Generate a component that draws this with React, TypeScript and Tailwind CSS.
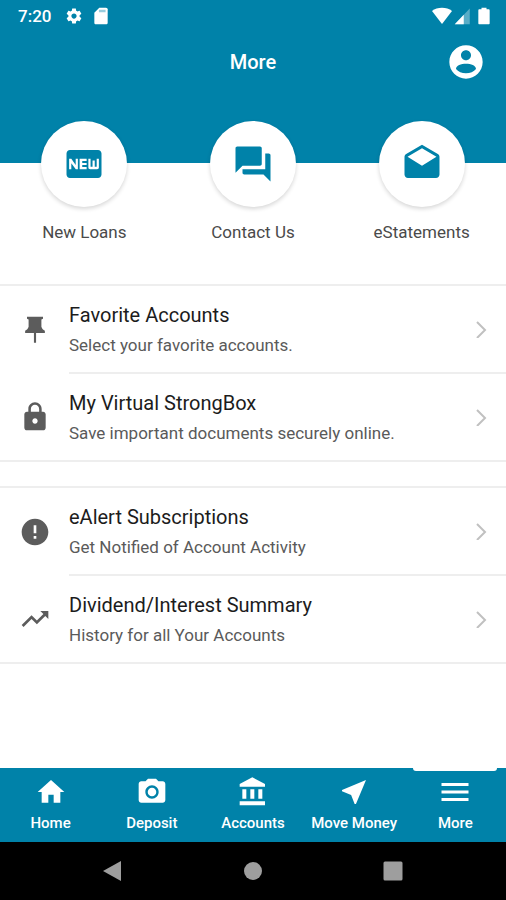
import type { ReactNode } from "react";

const ICONS = {
  settings:
    "M19.43 12.98c.04-.32.07-.64.07-.98s-.03-.66-.07-.98l2.11-1.65c.19-.15.24-.42.12-.64l-2-3.46c-.12-.22-.39-.3-.61-.22l-2.49 1c-.52-.4-1.08-.73-1.69-.98l-.38-2.65C14.46 2.18 14.25 2 14 2h-4c-.25 0-.46.18-.49.42l-.38 2.65c-.61.25-1.17.59-1.69.98l-2.49-1c-.23-.09-.49 0-.61.22l-2 3.46c-.13.22-.07.49.12.64l2.11 1.65c-.04.32-.07.65-.07.98s.03.66.07.98l-2.11 1.65c-.19.15-.24.42-.12.64l2 3.46c.12.22.39.3.61.22l2.49-1c.52.4 1.08.73 1.69.98l.38 2.65c.03.24.24.42.49.42h4c.25 0 .46-.18.49-.42l.38-2.65c.61-.25 1.17-.59 1.69-.98l2.49 1c.23.09.49 0 .61-.22l2-3.46c.12-.22.07-.49-.12-.64l-2.11-1.65zM12 15.5c-1.93 0-3.5-1.57-3.5-3.5s1.57-3.5 3.5-3.5 3.5 1.57 3.5 3.5-1.57 3.5-3.5 3.5z",
  sdCard: "M18 2h-8L4 8v12c0 1.1.9 2 2 2h12c1.1 0 2-.9 2-2V4c0-1.1-.9-2-2-2z",
  wifi: "M0 6C3.200 3.300 7.500 2 12 2S20.800 3.300 24 6L12 21.500z",
  battery:
    "M17.500 4H15V2H9v2H6.500C5.700 4 5.200 4.600 5.200 5.330v15.330C5.200 21.400 5.700 22 6.500 22h11c.800 0 1.300-.6 1.300-1.330V5.330C18.800 4.600 18.300 4 17.500 4z",
  account:
    "M12 2C6.48 2 2 6.480 2 12s4.480 10 10 10 10-4.480 10-10S17.520 2 12 2zm0 3c1.660 0 3 1.340 3 3s-1.340 3-3 3-3-1.340-3-3 1.340-3 3-3zm0 13.800c-2.500 0-4.710-.9-6-2.600.030-1.990 3-3.080 6-3.080s5.970 1.090 6 3.080c-1.290 1.700-3.500 2.600-6 2.600z",
  fiberNew:
    "M20 4H4c-1.11 0-1.990.890-1.990 2L2 18c0 1.110.890 2 2 2h16c1.110 0 2-.89 2-2V6c0-1.110-.89-2-2-2zM8.500 15H7.300l-2.550-3.500V15H3.500V9h1.250l2.500 3.500V9H8.500v6zm5-4.740H11v1.120h2.500v1.260H11v1.110h2.500V15h-4V9h4v1.260zm7 3.740c0 .550-.45 1-1 1h-4c-.55 0-1-.45-1-1V9h1.250v4.510h1.130V9.990h1.250v3.510h1.120V9h1.250v5z",
  forum:
    "M21 6h-2v9H6v2c0 .550.450 1 1 1h11l4 4V7c0-.55-.45-1-1-1zm-4 6V3c0-.55-.45-1-1-1H3c-.55 0-1 .450-1 1v14l4-4h10c.550 0 1-.45 1-1z",
  drafts:
    "M21.990 8c0-.72-.37-1.350-.94-1.700L12 1 2.950 6.300C2.380 6.650 2 7.280 2 8v10c0 1.100.900 2 2 2h16c1.100 0 2-.9 2-2l-.01-10zM12 13L3.740 7.840 12 3l8.260 4.840L12 13z",
  pin: "M6 2h12v1.500l-1.200.6V9.500c.400 1.500 1.400 2.400 2.600 3.100V14.200h-6.600v7.300h-1.600v-7.300H4.600v-1.600c1.200-.7 2.200-1.600 2.600-3.100V4.100L6 3.500z",
  lock: "M18 8h-1V6c0-2.760-2.240-5-5-5S7 3.240 7 6v2H6c-1.100 0-2 .9-2 2v10c0 1.100.9 2 2 2h12c1.100 0 2-.9 2-2V10c0-1.100-.9-2-2-2zm-6 9c-1.100 0-2-.9-2-2s.9-2 2-2 2 .9 2 2-.9 2-2 2zm3.100-9H8.900V6c0-1.710 1.390-3.100 3.100-3.100 1.710 0 3.100 1.390 3.100 3.100v2z",
  error:
    "M12 2C6.480 2 2 6.480 2 12s4.480 10 10 10 10-4.480 10-10S17.520 2 12 2zm1 15h-2v-2h2v2zm0-4h-2V7h2v6z",
  trending:
    "M16 6l2.290 2.290-4.880 4.880-4-4L2 16.590 3.410 18l6-6 4 4 6.300-6.290L22 12V6z",
  home: "M10 20v-6h4v6h5v-8h3L12 3 2 12h3v8z",
  camera:
    "M9 2L7.170 4H4c-1.100 0-2 .9-2 2v12c0 1.100.9 2 2 2h16c1.100 0 2-.9 2-2V6c0-1.100-.9-2-2-2h-3.170L15 2H9zm3 15c-2.760 0-5-2.240-5-5s2.240-5 5-5 5 2.240 5 5-2.240 5-5 5zm0-1.800a3.200 3.200 0 1 0 0-6.400 3.200 3.200 0 0 0 0 6.400z",
  bank: "M4 10v7h3v-7H4zm6 0v7h3v-7h-3zM2 22h19v-3H2v3zm14-12v7h3v-7h-3zm-4.500-9L2 6v2h19V6l-9.500-5z",
  nearMe: "M21 3L3 10.530v.980l6.840 2.650L12.480 21h.980L21 3z",
  menu: "M3 18h18v-2H3v2zm0-5h18v-2H3v2zm0-7v2h18V6H3z",
};

type IconName = keyof typeof ICONS;

function Icon({ name, className }: { name: IconName; className: string }) {
  return (
    <svg viewBox="0 0 24 24" fill="currentColor" fillRule="evenodd" aria-hidden="true" className={className}>
      <path d={ICONS[name]} />
    </svg>
  );
}

const shortcuts: { icon: IconName; label: string }[] = [
  { icon: "fiberNew", label: "New Loans" },
  { icon: "forum", label: "Contact Us" },
  { icon: "drafts", label: "eStatements" },
];

type Item = { icon: IconName; title: string; detail: string };

const accountItems: Item[] = [
  { icon: "pin", title: "Favorite Accounts", detail: "Select your favorite accounts." },
  { icon: "lock", title: "My Virtual StrongBox", detail: "Save important documents securely online." },
];

const activityItems: Item[] = [
  { icon: "error", title: "eAlert Subscriptions", detail: "Get Notified of Account Activity" },
  { icon: "trending", title: "Dividend/Interest Summary", detail: "History for all Your Accounts" },
];

const tabs: { icon: IconName; label: string }[] = [
  { icon: "home", label: "Home" },
  { icon: "camera", label: "Deposit" },
  { icon: "bank", label: "Accounts" },
  { icon: "nearMe", label: "Move Money" },
  { icon: "menu", label: "More" },
];

function StatusBar() {
  return (
    <div className="flex h-8 items-center justify-between pl-[18px] pr-3 text-white">
      <div className="flex items-center">
        <span className="text-[17px] font-medium leading-8">7:20</span>
        <Icon name="settings" className="ml-3.5 size-[18px]" />
        <svg viewBox="0 0 24 24" aria-hidden="true" className="ml-2 size-5">
          <path d={ICONS.sdCard} fill="currentColor" />
          <path d="M9.500 4.500h8v3h-8z" fill="#0082a9" fillOpacity="0.4" />
        </svg>
      </div>
      <div className="flex items-center">
        <Icon name="wifi" className="size-5" />
        <svg viewBox="0 0 24 24" fill="currentColor" aria-hidden="true" className="ml-0.5 size-[18px]">
          <path d="M1 23h20V2z" fillOpacity="0.35" />
          <path d="M1 23h12V10.400z" />
        </svg>
        <Icon name="battery" className="ml-0.5 size-5" />
      </div>
    </div>
  );
}

function Row({ item, last }: { item: Item; last: boolean }) {
  return (
    <li>
      <button type="button" className="flex w-full items-stretch text-left">
        <span className="flex w-[69px] shrink-0 items-center justify-center text-[#5c5c5c]">
          <Icon name={item.icon} className="size-8" />
        </span>
        <span
          className={
            last
              ? "flex min-w-0 grow items-center justify-between pr-4"
              : "flex min-w-0 grow items-center justify-between border-b-2 border-[#eeeeee] pr-4"
          }
        >
          <span className="flex flex-col pb-3 pt-3.5">
            <span className="text-[20px] leading-[30px] text-[#1c1c1c]">{item.title}</span>
            <span className="text-[17px] leading-[30px] text-[#5a5a5a]">{item.detail}</span>
          </span>
          <svg
            viewBox="0 0 18 18"
            fill="none"
            stroke="#c0c0c0"
            strokeWidth="2"
            aria-hidden="true"
            className="size-[18px] shrink-0"
          >
            <path d="M5 2l8 8-8 8" />
          </svg>
        </span>
      </button>
    </li>
  );
}

function Section({ items }: { items: Item[] }) {
  return (
    <ul className="border-y-2 border-[#eeeeee]">
      {items.map((item, index) => (
        <Row key={item.title} item={item} last={index === items.length - 1} />
      ))}
    </ul>
  );
}

function SystemKey({ label, children }: { label: string; children: ReactNode }) {
  return (
    <button type="button" aria-label={label} className="flex size-10 items-center justify-center text-[#9e9e9e]">
      <svg viewBox="0 0 20 20" fill="currentColor" aria-hidden="true" className="size-5">
        {children}
      </svg>
    </button>
  );
}

export default function App() {
  return (
    <div className="flex min-h-screen flex-col bg-white font-[Roboto,sans-serif]">
      <header className="bg-[#0082a9] pb-[72px]">
        <StatusBar />
        <div className="grid h-[59px] grid-cols-[1fr_auto_1fr] items-center px-5">
          <h1 className="col-start-2 text-[20px] font-medium leading-7 text-white">More</h1>
          <button type="button" aria-label="Profile" className="justify-self-end text-white">
            <Icon name="account" className="size-10" />
          </button>
        </div>
      </header>

      <main className="grow">
        <nav aria-label="Shortcuts" className="-mt-[42px] grid grid-cols-3 pb-[39px]">
          {shortcuts.map((shortcut) => (
            <a key={shortcut.label} href="#" className="flex flex-col items-center">
              <span className="flex size-[86px] items-center justify-center rounded-full bg-white text-[#0082a9] shadow-[0_2px_4px_rgba(0,0,0,0.16)]">
                <Icon name={shortcut.icon} className="size-[42px]" />
              </span>
              <span className="mt-3 text-[17px] leading-[26px] text-[#4a4a4a]">{shortcut.label}</span>
            </a>
          ))}
        </nav>
        <div className="flex flex-col gap-6">
          <Section items={accountItems} />
          <Section items={activityItems} />
        </div>
      </main>

      <nav aria-label="Main" className="grid grid-cols-5 bg-[#0082a9]">
        {tabs.map((tab) => (
          <a
            key={tab.label}
            href="#"
            aria-current={tab.label === "More" ? "page" : undefined}
            className="flex h-[74px] flex-col items-center whitespace-nowrap text-white"
          >
            <span className={tab.label === "More" ? "h-[3px] w-[84px] rounded-b-sm bg-white" : "h-[3px]"} />
            <span className="mt-[3px] flex h-9 items-center">
              <Icon name={tab.icon} className={tab.icon === "menu" ? "size-9" : "size-8"} />
            </span>
            <span className="text-[15px] font-medium leading-[26px]">{tab.label}</span>
          </a>
        ))}
      </nav>

      <div className="flex h-[58px] items-center justify-center gap-[100px] bg-black">
        <SystemKey label="Back">
          <path d="M18 0v20L0 10z" />
        </SystemKey>
        <SystemKey label="Home screen">
          <circle cx="10" cy="10" r="9" />
        </SystemKey>
        <SystemKey label="Recent apps">
          <rect x="0.500" y="0.500" width="19" height="19" rx="1.500" />
        </SystemKey>
      </div>
    </div>
  );
}
